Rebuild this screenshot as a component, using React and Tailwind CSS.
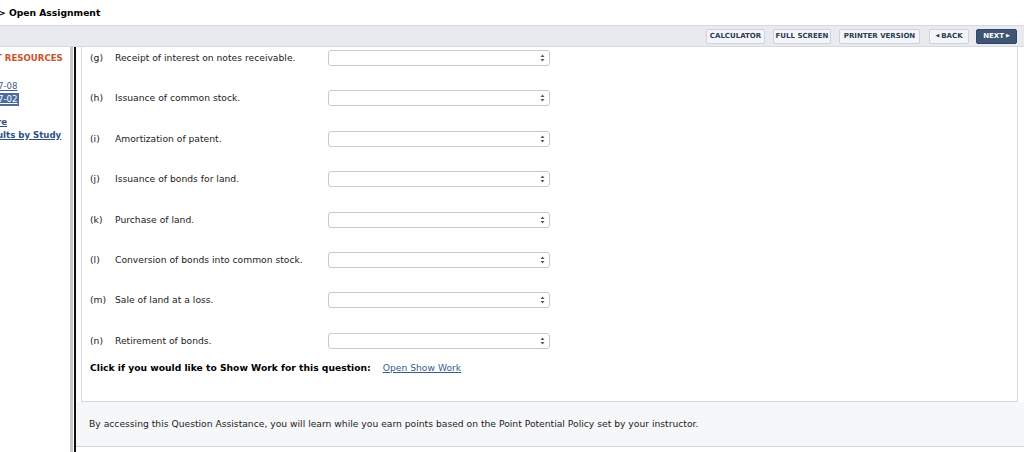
import React from "react";

const rows = [
  ["(g)", "Receipt of interest on notes receivable."],
  ["(h)", "Issuance of common stock."],
  ["(i)", "Amortization of patent."],
  ["(j)", "Issuance of bonds for land."],
  ["(k)", "Purchase of land."],
  ["(l)", "Conversion of bonds into common stock."],
  ["(m)", "Sale of land at a loss."],
  ["(n)", "Retirement of bonds."],
];

function Select() {
  return (
    <div className="w-[222px] h-[16px] border border-[#c9c9c9] rounded-[3px] bg-white flex items-center justify-end pr-[4px]">
      <svg width="5" height="8" viewBox="0 0 5 8">
        <path d="M2.5 0.5 L4.5 3 L0.5 3 Z" fill="#555" />
        <path d="M2.5 7.5 L4.5 5 L0.5 5 Z" fill="#555" />
      </svg>
    </div>
  );
}

function Btn({ children, dark, w }) {
  return (
    <div
      className={
        (dark
          ? "h-[15px] flex items-center justify-center rounded-[2px] bg-[#3f5575] border border-[#34475f] text-white text-[7px] font-bold"
          : "h-[15px] flex items-center justify-center rounded-[2px] bg-[#f4f5f8] border border-[#cdd2db] text-[#2c3b58] text-[7px] font-bold") +
        " " +
        w
      }
    >
      {children}
    </div>
  );
}

export default function App() {
  return (
    <div className="w-[1024px] h-[452px] overflow-hidden bg-white font-['DejaVu_Sans',Verdana,sans-serif] text-[#222]">
      <div className="h-[25px] flex items-center -ml-[2px]">
        <span className="text-[9.2px] font-bold text-black">&gt; Open Assignment</span>
      </div>
      <div className="h-[22px] bg-[#e8eaef] border-y border-[#d6d9df] flex items-center justify-end pr-[7px]">
        <div className="flex items-center">
          <Btn w="w-[59px]">CALCULATOR</Btn>
          <div className="w-[8px]" />
          <Btn w="w-[58px]">FULL SCREEN</Btn>
          <div className="w-[8px]" />
          <Btn w="w-[81px]">PRINTER VERSION</Btn>
          <div className="w-[9px]" />
          <Btn w="w-[40px]">
            <span className="text-[5px] mr-[2px]">◀</span>BACK
          </Btn>
          <div className="w-[7px]" />
          <Btn dark w="w-[41px]">
            NEXT<span className="text-[5px] ml-[2px]">▶</span>
          </Btn>
        </div>
      </div>
      <div className="flex h-[405px]">
        <div className="w-[70px] flex flex-col text-[8.6px] font-bold overflow-hidden">
          <div className="mt-[5px] -ml-[4px] text-[#c9532b] whitespace-nowrap">T RESOURCES</div>
          <div className="mt-[15px] -ml-[2px] text-[#3b5b93] underline font-normal">7-08</div>
          <div className="mt-[0px] -ml-[2px] w-max bg-[#4d6c9c] text-white underline font-normal pr-[1px]">7-02</div>
          <div className="mt-[10px] -ml-[3px] text-[#2f4f86] underline">re</div>
          <div className="mt-[0px] -ml-[3px] text-[#2f4f86] underline whitespace-nowrap">ults by Study</div>
        </div>
        <div className="w-[3px] bg-[#c9c9c9]" />
        <div className="w-[1px]" />
        <div className="w-[2px] bg-[#111]" />
        <div className="flex-1 flex flex-col">
          <div className="h-[355px] ml-[5px] mr-[6px] border-r border-l border-b border-[#d3d6dc] bg-white pl-[8px] text-[9.2px] flex flex-col">
            <div className="flex flex-col pt-[3px]">
              {rows.map(([k, t]) => (
                <div key={k} className="h-[40.4px] flex items-start">
                  <div className="flex items-center h-[16px]">
                    <span className="w-[25px]">{k}</span>
                    <span className="w-[213px] whitespace-nowrap">{t}</span>
                    <Select />
                  </div>
                </div>
              ))}
            </div>
            <div className="-mt-[12px] flex items-center">
              <span className="font-bold text-black">Click if you would like to Show Work for this question:</span>
              <span className="ml-[12px] text-[#3b5b93] underline">Open Show Work</span>
            </div>
          </div>
          <div className="h-[45px] bg-[#f6f7f9] border-b border-[#d3d6dc] flex items-center pl-[13px] text-[9.2px] text-[#222]">
            By accessing this Question Assistance, you will learn while you earn points based on the Point Potential Policy set by your instructor.
          </div>
        </div>
      </div>
    </div>
  );
}
